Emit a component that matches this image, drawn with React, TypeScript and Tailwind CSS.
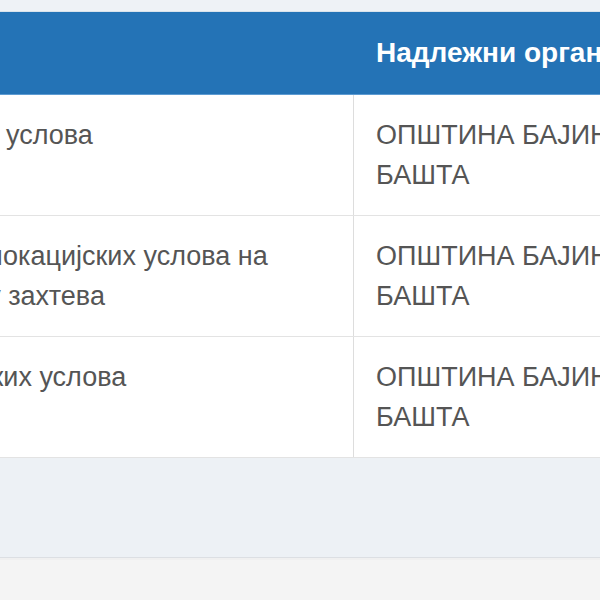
const rows = [
  { lines: [{ text: "услова", shift: "ml-[6px]" }] },
  {
    lines: [
      { text: "локацијских услова на", shift: "-ml-[13px]" },
      { text: "основу захтева", shift: "-ml-[85px]" },
    ],
  },
  { lines: [{ text: "ских услова", shift: "-ml-[22px]" }] },
];

const App = () => {
  return (
    <div className="w-[600px] h-[600px] overflow-hidden bg-[#f4f4f4] font-['Liberation_Sans',Arial,sans-serif]">
      <div className="h-[12px] bg-[#eef2f6] border-b border-[#d9e3ec]"></div>
      <div className="flex h-[83px] bg-[#2473b6] border-b border-[#5d9bd2]">
        <div className="w-[354px] shrink-0"></div>
        <div className="flex items-center pl-[22px] whitespace-nowrap text-white font-bold text-[28px]">
          Надлежни орган
        </div>
      </div>
      {rows.map((row, i) => (
        <div key={i} className="flex h-[121px] bg-white border-b border-[#e3e3e3] text-[#555555] text-[27px] leading-[40px]">
          <div className="w-[354px] shrink-0 overflow-hidden border-r border-[#dddddd] py-[20px]">
            {row.lines.map((l, j) => (
              <div key={j} className={"whitespace-nowrap " + l.shift}>
                {l.text}
              </div>
            ))}
          </div>
          <div className="pl-[22px] py-[20px] whitespace-nowrap">
            <div>ОПШТИНА БАЈИНА</div>
            <div>БАШТА</div>
          </div>
        </div>
      ))}
      <div className="h-[100px] bg-[#edf1f5] border-b border-[#dcdfe3]"></div>
      <div className="h-[2px] bg-[#f0f0f0]"></div>
    </div>
  );
};

export default App;
